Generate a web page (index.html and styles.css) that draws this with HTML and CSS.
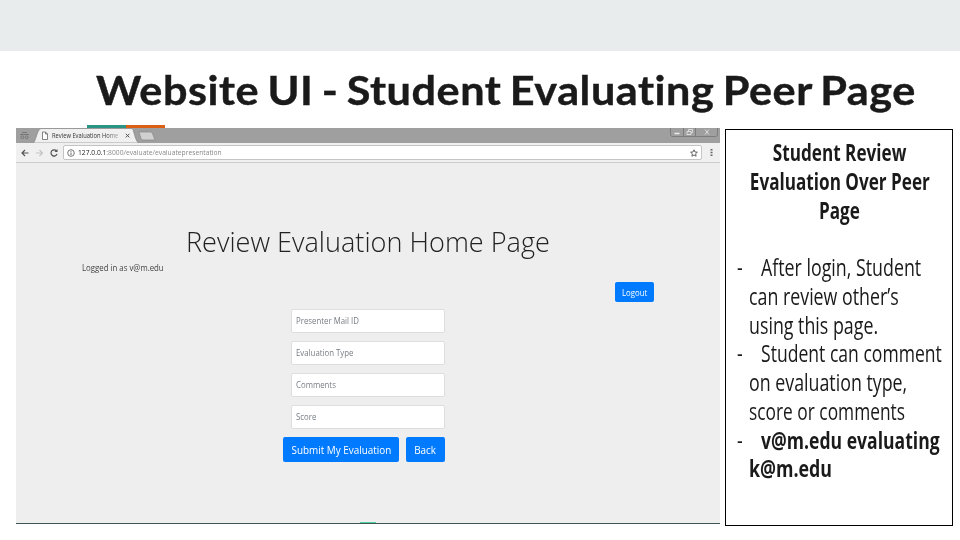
FILE: index.html
```html
<!DOCTYPE html>
<html lang="en">
<head>
<meta charset="utf-8">
<title>Website UI - Student Evaluating Peer Page</title>
<link rel="stylesheet" href="styles.css">
</head>
<body>
<div class="band"></div>
<header class="slide-head">
  <h1><span class="fit">Website UI - Student Evaluating Peer Page</span></h1>
  <div class="accent"><i></i><i></i></div>
</header>
<main class="content">
  <section class="browser">
    <div class="tabbar">
      <svg class="tabs" width="150" height="15" viewBox="0 0 150 15">
        <g fill="none" stroke="#777"><path d="M6 4.500h5M4 6.500h9"/><circle cx="6.300" cy="9.300" r="1.400"/><circle cx="10.700" cy="9.300" r="1.400"/></g>
        <path d="M17 15C20 14 21 1 25 .5H116C118 1 119 14 123 15Z" fill="#f0f0f0" stroke="#858585" stroke-width=".7"/>
        <path d="M123 4h11.500q1.500 0 2 1.500l2.500 6.500h-12q-1.500 0-2-1.500z" fill="#d0d0d0" stroke="#888" stroke-width=".7"/>
        <path d="M26.500 4h3l2 2v5.500h-5zM29.500 4v2h2" fill="#fff" stroke="#666" stroke-width=".8"/>
        <path d="M109.800 5.800l3.600 3.600m0-3.600l-3.600 3.600" stroke="#555"/>
      </svg>
      <span class="tab-title"><span class="fit">Review Evaluation Home</span></span>
      <svg class="winctl" width="48" height="9" viewBox="0 0 48 9">
        <path d="M.5 0v6.500q0 2 2 2h43q2 0 2-2V0M13.500 0v8.500M25.500 0v8.500" fill="none" stroke="#7d7d7d"/>
        <path d="M4.500 5.500h5" stroke="#eee" stroke-width="1.500"/>
        <path d="M17 3.500h4v3h-4zM18.500 3V1.500h4v3h-1.500M35 1.500l4 5m0-5l-4 5" fill="none" stroke="#ddd"/>
      </svg>
    </div>
    <div class="toolbar">
      <svg width="44" height="12" viewBox="0 0 44 12" fill="none" stroke-width="1.200">
        <path d="M8.500 6H2M5 3L2 6l3 3" stroke="#555"/>
        <path d="M16 6h6.500M19.500 3l3 3-3 3" stroke="#c4c4c4"/>
        <path d="M36.500 4A3.100 3.100 0 1 0 37 7" stroke="#555"/><path d="M37.500 2v3h-3z" fill="#555"/>
      </svg>
      <div class="address">
        <svg width="8" height="8" viewBox="0 0 8 8"><circle cx="4" cy="4" r="3.300" fill="none" stroke="#555" stroke-width=".8"/><path d="M4 3.500V6M4 1.900v.9" stroke="#555" stroke-width=".9"/></svg>
        <span class="url"><span class="fit"><b>127.0.0.1</b>:8000/evaluate/evaluatepresentation</span></span>
        <svg class="star" width="8" height="8" viewBox="0 0 8 8"><path d="M4 .8l1 2.200 2.400.2-1.800 1.600.5 2.400L4 6 1.900 7.200l.5-2.400L.6 3.200 3 3z" fill="none" stroke="#555" stroke-width=".9"/></svg>
      </div>
      <svg class="dots" width="3" height="9" viewBox="0 0 3 9" fill="#666"><path d="M.5 1h2v1.500h-2zM.5 3.800h2v1.500h-2zM.5 6.600h2v1.500h-2z"/></svg>
    </div>
    <div class="page">
      <h2><span class="fit">Review Evaluation Home Page</span></h2>
      <p class="login"><span class="fit small">Logged in as v@m.edu</span></p>
      <div class="logout-row"><button class="logout"><span class="fit small">Logout</span></button></div>
      <form class="fields">
        <div class="field"><span class="fit small">Presenter Mail ID</span></div>
        <div class="field"><span class="fit small">Evaluation Type</span></div>
        <div class="field"><span class="fit small">Comments</span></div>
        <div class="field"><span class="fit small">Score</span></div>
        <div class="actions"><button type="button" class="submit"><span class="fit">Submit My Evaluation</span></button><button type="button" class="back"><span class="fit">Back</span></button></div>
      </form>
    </div>
    <div class="progress"></div>
  </section>
  <aside class="notes">
    <h3><span class="fit">Student Review</span><span class="fit">Evaluation Over Peer</span><span class="fit">Page</span></h3>
    <ul>
      <li><span class="fit lead">After login, Student</span><span class="fit">can review other’s</span><span class="fit">using this page.</span></li>
      <li><span class="fit lead snug">Student can comment</span><span class="fit">on evaluation type,</span><span class="fit tight">score or comments</span></li>
      <li class="strong"><span class="fit lead snug">v@m.edu evaluating</span><span class="fit">k@m.edu</span></li>
    </ul>
  </aside>
</main>
</body>
</html>
```
FILE: styles.css
```css
* { box-sizing: border-box; }
body { margin: 0; width: 960px; height: 540px; overflow: hidden; background: #fff; color: #1a1a1a; font-family: "Open Sans", sans-serif; }
.fit { display: inline-block; white-space: nowrap; transform-origin: left center; }
.band { height: 51px; background: #e8eced; }
.slide-head { height: 77px; padding: 15px 0 0 96px; }
h1 { margin: 0; height: 59px; font: bold 40px/48px Lato, sans-serif; letter-spacing: .5px; word-spacing: -2.5px; white-space: nowrap; font-variant-ligatures: none; -webkit-text-stroke: .4px #1a1a1a; }
h1 .fit { transform: scaleX(1.08); }
.accent { display: flex; margin-left: -9px; }
.accent i { width: 39px; height: 3px; background: #2a9484; }
.accent i + i { background: #db5f14; }
.content { display: flex; gap: 5px; padding-left: 16px; }
.browser { width: 704px; height: 396px; background: #eee; border-bottom: 1px solid #3e5754; }
.tabbar { height: 15px; display: flex; background: #9f9f9f; position: relative; }
.tab-title { position: absolute; left: 36px; top: 1px; width: 67px; overflow: hidden; font-size: 6.5px; line-height: 13px; color: #333; mask-image: linear-gradient(to right, #000 80%, rgba(0, 0, 0, .3)); }
.tab-title .fit { transform: scaleX(.89); }
.winctl { margin-left: auto; margin-right: 2px; }
.toolbar { height: 20px; display: flex; align-items: center; padding-left: 4px; background: #f0f0f0; border-bottom: 1px solid #ccc; }
.address { width: 639px; height: 15px; margin-left: -1px; display: flex; align-items: center; padding: 0 3px; background: #fff; border: 1px solid #c4c4c4; border-radius: 2px; }
.url { margin-left: 3px; font-size: 7px; line-height: 13px; color: #888; }
.url .fit { transform: scaleX(.96); }
.url b { font-weight: 400; color: #222; }
.star { margin-left: auto; }
.dots { margin-left: 8px; }
.page { height: 359px; padding-top: 58px; }
h2 { margin: 0 0 1px 170px; font-size: 28px; line-height: 40px; font-weight: 300; white-space: nowrap; color: #222; }
h2 .fit { transform: scaleX(.968); }
.small { font-size: 9px; transform: scaleX(.87); }
.login { margin: 0 0 0 66px; height: 12px; font-size: 9px; line-height: 12px; color: #444; }
.logout-row { display: flex; justify-content: flex-end; padding: 8px 66px 0 0; }
button { border: 0; padding: 0; background: #007bff; color: #fff; border-radius: 2px; font-family: inherit; }
.logout { width: 39px; height: 20px; font-size: 9px; }
.logout .fit { transform-origin: center; }
.fields { display: flex; flex-direction: column; gap: 8px; margin: 7px 0 0 275px; width: 154px; }
.field { height: 24px; border: 1px solid #dcdfe2; border-radius: 2px; background: #fff; padding-left: 4px; font-size: 9px; line-height: 22px; color: #777d83; }
.actions { display: flex; gap: 7px; margin-left: -8px; }
.actions .fit { transform: scaleX(.9); transform-origin: center; }
.submit { width: 116px; height: 25px; font-size: 11px; }
.back { width: 39px; height: 25px; font-size: 11px; }
.submit .fit { margin: 0 -10px; }
.progress { width: 16px; height: 1px; margin-left: 344px; background: #4fd0a0; }
.notes { width: 228px; height: 397px; margin-top: 1px; border: 1px solid #000; padding: 8px 0 0 23px; font-size: 23px; line-height: 28.75px; }
h3 { margin: 0 22px 28.75px 0; font-size: inherit; display: flex; flex-direction: column; align-items: center; }
h3 .fit { transform: scaleX(.745); transform-origin: center; }
ul { margin: 0; padding: 0; list-style: none; }
li { display: flex; flex-direction: column; align-items: flex-start; position: relative; }
li::before { content: "-"; position: absolute; left: -12px; top: 0; font-weight: 400; transform: scaleX(.77); transform-origin: left; }
li .fit { transform: scaleX(.774); }
li .snug { transform: scaleX(.764); }
li .tight { transform: scaleX(.754); }
.lead { margin-left: 12px; }
.strong { font-weight: 700; }
```
